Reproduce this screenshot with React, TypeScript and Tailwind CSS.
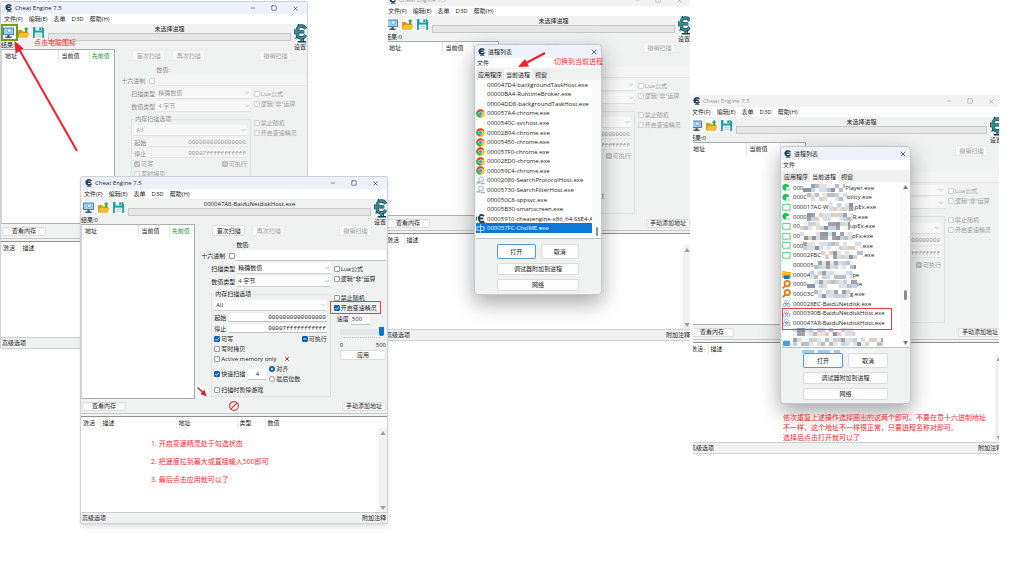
import React from "react";
import { ChevronDown, Minus, Square, X } from "lucide-react";

const field = "min-w-0 bg-white border-b border-b-[#c2c2c2] px-px text-[6px] leading-[8px] outline-none disabled:bg-[#f4f4f4] disabled:border-b-[#e6e6e6] disabled:text-[#999]";
const note = "text-[#ee2a30] text-[7px] whitespace-nowrap";

const processes = [
    { icon: '', name: '000047D4-backgroundTaskHost.exe' },
    { icon: '', name: '00000BA4-RuntimeBroker.exe' },
    { icon: '', name: '00004DD8-backgroundTaskHost.exe' },
    { icon: 'chrome', name: '000057A4-chrome.exe' },
    { icon: '', name: '0000540C-svchost.exe' },
    { icon: 'chrome', name: '00002B94-chrome.exe' },
    { icon: 'chrome', name: '00005450-chrome.exe' },
    { icon: 'chrome', name: '000057F0-chrome.exe' },
    { icon: 'chrome', name: '00002ED0-chrome.exe' },
    { icon: 'chrome', name: '000059C4-chrome.exe' },
    { icon: 'search', name: '00002080-SearchProtocolHost.exe' },
    { icon: 'search', name: '00005730-SearchFilterHost.exe' },
    { icon: '', name: '000050C8-sppsvc.exe' },
    { icon: '', name: '00005B30-smartscreen.exe' },
    { icon: 'engine', name: '00005910-cheatengine-x86_64-SSE4-A' },
    { icon: 'ime', name: '000057FC-ChsIME.exe', selected: true },
];

// blur = width of the pixelated part between name and tail
const hiddenProcesses = [
    { icon: 'green', name: '000', blur: 42, tail: 'Player.exe' },
    { icon: 'green', name: '000C', blur: 40, tail: 'bility.exe' },
    { icon: 'box', name: '000017AC-W', blur: 26, tail: 'pEx.exe' },
    { icon: 'green', name: '0000', blur: 46, tail: 'R.exe' },
    { icon: 'box', name: '00', blur: 50, tail: 'upEx.exe' },
    { icon: 'box', name: '00', blur: 52, tail: 'pFx.exe' },
    { icon: 'box', name: '000', blur: 58, tail: '.exe' },
    { icon: 'box', name: '00002FBC', blur: 42, tail: '.exe' },
    { icon: '', name: '000005', blur: 42, tail: '' },
    { icon: 'folder', name: '00004', blur: 42, tail: 'pe' },
    { icon: 'orange', name: '0000', blur: 50, tail: 'te' },
    { icon: 'orange', name: '00003C', blur: 36, tail: 'g.exe' },
    { icon: 'baidu', name: '000028EC-BaiduNetdisk.exe' },
    { icon: 'baidu', name: '0000390B-BaiduNetdiskHost.exe' },
    { icon: 'baidu', name: '000047A8-BaiduNetdiskHost.exe' },
    { icon: '', name: '', blur: 62, tail: '' },
    { icon: 'blue', name: '', blur: 90, tail: '' },
];

const EngineLogo = ({ className, color = '#1d3b4d', fill = '#1d3b4d' }: any) => (
    <svg viewBox="0 0 14 18" className={className} preserveAspectRatio="none">
        <path d="M12.6 4.6C11.6 2.6 9.8 1.8 7.8 1.9C4.6 2 2.9 4.4 3 7.6C3.1 11 5 13.2 8 13.2C10 13.2 11.6 12.3 12.6 10.4M2.6 7.5H11" fill="none" stroke={color} strokeWidth="3.2" />
        <path d="M12.6 4.6C11.6 2.6 9.8 1.8 7.8 1.9C4.6 2 2.9 4.4 3 7.6C3.1 11 5 13.2 8 13.2C10 13.2 11.6 12.3 12.6 10.4M2.6 7.5H11" fill="none" stroke={fill} strokeWidth="1.8" />
        <path d="M1 5.2L0 7.5L1 9.8M4 1.4L5.4 0M3 12L1.8 13.8" stroke={color} strokeWidth="1.2" fill="none" />
        <path d="M7.6 14V16M10 14V16M4 16.8H13" stroke={color} strokeWidth="1.4" />
    </svg>
);

const ProcessIcon = ({ icon }: { icon: string }) => (
    <svg viewBox="0 0 10 10" className="w-[9px] h-[9px] shrink-0">
        {icon === 'chrome' && <>
            <circle cx="5" cy="5" r="4.8" fill="#fbc116" />
            <path d="M5 5L0.8 2.7A4.8 4.8 0 0 1 9.3 2.9H5Z" fill="#e33b2e" />
            <path d="M5 5L0.8 2.7A4.8 4.8 0 0 0 4.6 9.8L7 6.2Z" fill="#2da94f" />
            <circle cx="5" cy="5" r="2.3" fill="#fff" />
            <circle cx="5" cy="5" r="1.8" fill="#4285f4" />
        </>}
        {icon === 'search' && <>
            <circle cx="5.6" cy="3.8" r="2.8" fill="#e6eff5" stroke="#9ba8b2" strokeWidth="0.8" />
            <path d="M4 6L2 7.6" stroke="#8e9ba6" strokeWidth="1.2" />
            <path d="M0.6 7.4H4.4M5 8.4H9.8" stroke="#a3adb5" strokeWidth="1.6" />
        </>}
        {icon === 'engine' && <>
            <path d="M9 2.2C6 0.4 3 1.6 3 5C3 8.4 6 9.6 9 8M2 5H8" fill="none" stroke="#1d3b4d" strokeWidth="2" />
            <path d="M0.5 3V7M4 0.8H7M4 9.4H9.6" stroke="#1d3b4d" />
        </>}
        {icon === 'ime' && <path d="M1 3H9V7H1ZM5 0.5V9.8" fill="none" stroke="#cfe5f8" />}
        {icon === 'green' && <>
            <path d="M5 1A3.8 3.8 0 1 0 5 8.4L4.6 5L8.4 4A3.8 3.8 0 0 0 5 1Z" fill="#1fc457" />
            <circle cx="8" cy="7.6" r="1.6" fill="#d4d9d6" />
        </>}
        {icon === 'box' && <>
            <path d="M0.8 1.6H9V8H0.8Z" fill="#fff" stroke="#3ccf73" />
            <circle cx="8" cy="8" r="1.6" fill="#c9cfcb" />
        </>}
        {icon === 'folder' && <>
            <path d="M0 1H4L5 2.2H10V9H0Z" fill="#f6bd27" />
            <path d="M2 6H8.4V10H2Z" fill="#1672cb" />
        </>}
        {icon === 'orange' && <>
            <circle cx="5.8" cy="4" r="3" fill="#fff" stroke="#e27a17" strokeWidth="2" />
            <path d="M3.6 6.2L0.8 9.2" stroke="#e27a17" strokeWidth="2" />
        </>}
        {icon === 'baidu' && <>
            <circle cx="5" cy="3.4" r="2.2" fill="#fff" stroke="#6db2e6" strokeWidth="0.8" />
            <circle cx="2.8" cy="6.8" r="1.8" fill="#fff" stroke="#4a9fe0" strokeWidth="0.8" />
            <circle cx="7.2" cy="6.8" r="1.8" fill="#fff" stroke="#4a9fe0" strokeWidth="0.8" />
            <path d="M3.4 5.6L5 4L6.6 5.6" stroke="#e5434a" fill="none" />
        </>}
        {icon === 'blue' && <path d="M1 3H9V9H1Z" fill="#4a9fe0" />}
    </svg>
);

const mosaicColors = ['#ffffff', '#b9bfc9', '#e9e2dc', '#8e96a6', '#ffffff', '#d4dfec', '#a2a2a8', '#dccfc4', '#f4f4f4', '#c4d3e4'];

const Mosaic = ({ width, seed }: { width: number; seed: number }) => {
    const cells = [];
    for (let x = 0; x * 4 < width; x++) {
        for (let y = 0; y < 2; y++) {
            const n = (x * 7 + y * 13 + seed * 11 + ((x * x * (seed + 3)) % 17)) % mosaicColors.length;
            cells.push(<rect key={`${x}-${y}`} x={x * 4} y={y * 4} width="4" height="4" fill={mosaicColors[n]} />);
        }
    }
    return <svg className="h-[8px] shrink-0" style={{ width }} shapeRendering="crispEdges">{cells}</svg>;
};

const PushButton = ({ children, className = '', disabled = false, primary = false }: any) => (
    <button disabled={disabled} className={`flex items-center justify-center rounded-[2px] border bg-[#fdfdfd] text-[6px] leading-[8px] whitespace-nowrap disabled:text-[#a3a3a3] disabled:bg-[#f7f7f7] disabled:border-[#ebebeb] ${primary ? 'border-[#4c9bdc]' : 'border-[#dcdcdc]'} ${className}`}>
        {children}
    </button>
);

const Check = ({ label, checked = false, partial = false, disabled = false }: any) => (
    <label className={`flex items-center gap-px whitespace-nowrap ${disabled ? 'text-[#a0a0a0]' : ''}`}>
        <span className="grid shrink-0">
            <input type="checkbox" aria-label={label ? undefined : '十六进制'} defaultChecked={checked || partial} disabled={disabled} className="[grid-area:1/1] appearance-none w-[6px] h-[6px] rounded-[1px] border border-[#999] bg-white checked:bg-[#0f62b4] checked:border-[#0f62b4] disabled:border-[#cfcfcf] disabled:checked:bg-[#bdbdbd] disabled:checked:border-[#bdbdbd]" />
            {(checked || partial) && (
                <svg viewBox="0 0 6 6" className="[grid-area:1/1] w-[6px] h-[6px] pointer-events-none">
                    <path d={partial ? 'M1.4 3H4.6' : 'M1.3 3L2.6 4.3L4.8 1.8'} stroke="#fff" strokeWidth="0.8" fill="none" />
                </svg>
            )}
        </span>
        {label}
    </label>
);

const Pick = ({ name, value, disabled }: any) => (
    <div className={`flex items-center flex-1 min-w-0 h-[11px] border-b pr-px ${disabled ? 'bg-[#f8f8f8] border-[#e2e2e2] text-[#999]' : 'bg-white border-[#cfcfcf]'}`}>
        <select aria-label={name} disabled={disabled} className="appearance-none flex-1 min-w-0 pl-[2px] text-[6px] leading-[8px] bg-transparent outline-none">
            <option>{value}</option>
        </select>
        <ChevronDown className="w-[6px] h-[6px] text-[#888]" strokeWidth={2} />
    </div>
);

const Toolbar = () => (
    <>
        <button aria-label="open process" className="w-[13px] h-[13px] bg-[#fbfbfb]">
            <svg viewBox="0 0 13 13">
                <path d="M1 1.5H12V9H1Z" fill="#4d7fa8" />
                <path d="M2 2.5H11V8H2Z" fill="#9fd0f2" />
                <circle cx="7.4" cy="4.6" r="2" fill="#d6edfb" stroke="#5b8fb6" strokeWidth="0.6" />
                <path d="M5.4 9H7.6V11H5.4ZM3.4 10.6H9.6V12H3.4Z" fill="#4a5a67" />
            </svg>
        </button>
        <button aria-label="load" className="w-[13px] h-[13px] bg-[#fbfbfb]">
            <svg viewBox="0 0 13 13">
                <path d="M1 4H5L6 5.4H11V11.4H1Z" fill="#d79a17" />
                <path d="M3 7H12.4L11 11.6H1Z" fill="#f3c02f" />
                <path d="M8.2 6.4V3.6H6.8L9.2 1L11.6 3.6H10.2V6.4Z" fill="#36a53f" />
            </svg>
        </button>
        <button aria-label="save" className="w-[13px] h-[13px] bg-[#fbfbfb]">
            <svg viewBox="0 0 13 13">
                <path d="M1 1H10.4L12 2.6V12H1Z" fill="#16a0a3" />
                <path d="M3.4 1H9.6V4.6H3.4Z" fill="#dff3f3" />
                <path d="M7.4 1.6H8.8V4H7.4Z" fill="#126c70" />
                <path d="M2.8 6.6H10.2V12H2.8Z" fill="#f2f7f7" />
                <path d="M4 8.4H9M4 10.2H9" stroke="#9fb8b9" strokeWidth="0.7" />
            </svg>
        </button>
    </>
);

type EngineProps = {
    className: string;
    process: string;
    active?: boolean;
    attached?: boolean;
};

const EngineWindow = ({ className, process, active = false, attached = false }: EngineProps) => {
    const off = !attached;
    const dim = off ? 'text-[#909090]' : '';
    return (
        <section className={`absolute flex flex-col bg-[#f0f1f1] border border-[#cdd2d8] rounded-t-[3px] ${className}`}>
            <header className={`flex items-center h-[12px] shrink-0 pl-1 pr-[8px] rounded-t-[3px] ${active ? 'bg-[#edf2fa]' : 'bg-[#f2f2f2] text-[#999]'}`}>
                <EngineLogo className="w-[7px] h-[8px] mr-[3px]" />
                <h2 className="flex-1">Cheat Engine 7.5</h2>
                <div className="flex items-center gap-[15px]">
                    <Minus className="w-[6px] h-[6px]" />
                    <Square className="w-[6px] h-[6px]" />
                    <X className="w-[7px] h-[7px]" />
                </div>
            </header>
            <nav className="flex items-center gap-[6px] h-[10px] shrink-0 pl-[3px] bg-white">
                <a href="#">文件(F)</a>
                <a href="#">编辑(E)</a>
                <a href="#">表单</a>
                <a href="#">D3D</a>
                <a href="#">帮助(H)</a>
            </nav>

            <div className="flex h-[25px] shrink-0">
                <div className="flex-1 flex flex-col">
                    <div className="flex items-center gap-[2px] h-[17px] pl-px pr-[2px]">
                        <Toolbar />
                        <div className="flex-1 pl-px">
                            <p className="text-center">{process}</p>
                            <div className="h-[8px] bg-[#e6e6e6] border border-[#c9c9c9]" />
                        </div>
                    </div>
                    <p>结果:0</p>
                </div>
                <div className="w-[14px] flex flex-col items-center">
                    <EngineLogo className="w-[13px] h-[19px] shrink-0" color="#163c4c" fill="#2a93a0" />
                    <p className="whitespace-nowrap">设置</p>
                </div>
            </div>

            <div className="flex grow-2 basis-[175px]">
                <div className="grow-3 basis-[114px] bg-white border border-[#a9adb0] border-l-[#d5d5d5]">
                    <table className="w-full table-fixed">
                        <thead>
                            <tr className="h-[12px] text-left">
                                <th className="w-[56px] font-normal pl-[3px] border-r border-[#e5e5e5]">地址</th>
                                <th className="font-normal pl-[3px] border-r border-[#e5e5e5]">当前值</th>
                                <th className="w-[25px] font-normal pl-[2px] text-[#27933a]">先前值</th>
                            </tr>
                        </thead>
                    </table>
                </div>

                <form className="grow-6 basis-[191px] flex flex-col pb-[2px]">
                    <div className="grow basis-[13px] flex items-center gap-[7px] pl-[17px] pr-[15px]">
                        <PushButton disabled={off} className="w-[33px] h-[11px]">首次扫描</PushButton>
                        <PushButton disabled className="w-[33px] h-[11px]">再次扫描</PushButton>
                        <PushButton disabled className="w-[33px] h-[11px] ml-auto">撤销扫描</PushButton>
                    </div>
                    <p className={`basis-[12px] flex items-end pl-[41px] ${dim}`}>数值:</p>
                    <div className={`basis-[13px] flex items-center pr-px ${dim}`}>
                        <div className="w-[41px] flex items-center justify-end gap-1 pr-px shrink-0 whitespace-nowrap">
                            十六进制
                            <Check disabled={off} />
                        </div>
                        <input aria-label="数值" disabled={off} className={`${field} flex-1 h-[11px]`} />
                    </div>

                    <div className="grow basis-[135px] flex gap-[3px]">
                        <div className={`grow-2 basis-[135px] flex flex-col ${dim}`}>
                            <div className="basis-[13px] flex items-center">
                                <span className="w-[41px] shrink-0 text-right pr-px">扫描类型</span>
                                <Pick name="扫描类型" value="精确数值" disabled={off} />
                            </div>
                            <div className="basis-[13px] flex items-center">
                                <span className="w-[41px] shrink-0 text-right pr-px">数值类型</span>
                                <Pick name="数值类型" value="4 字节" disabled={off} />
                            </div>
                            <fieldset className="grow flex flex-col ml-[16px] mt-[2px] border border-[#e1e1e1] pl-[2px] pr-[3px] pt-px">
                                <legend className="px-px">内存扫描选项</legend>
                                <div className="grow basis-[13px] flex items-center">
                                    <Pick name="内存扫描选项" value="All" disabled={off} />
                                </div>
                                <label className="grow basis-[11px] flex items-center gap-[3px]">
                                    <span className="shrink-0">起始</span>
                                    <input disabled={off} defaultValue="0000000000000000" className={`${field} flex-1 h-[9px] text-right font-['Liberation_Mono',monospace]`} />
                                </label>
                                <label className="grow basis-[11px] flex items-center gap-[3px]">
                                    <span className="shrink-0">停止</span>
                                    <input disabled={off} defaultValue="00007fffffffffff" className={`${field} flex-1 h-[9px] text-right font-['Liberation_Mono',monospace]`} />
                                </label>
                                <div className="basis-[10px] flex items-center justify-between">
                                    <Check label="可写" checked disabled={off} />
                                    <Check label="可执行" partial disabled={off} />
                                </div>
                                <div className="basis-[10px] flex items-center">
                                    <Check label="写时拷贝" disabled={off} />
                                </div>
                                <div className="basis-[10px] flex items-center gap-[6px]">
                                    <Check label="Active memory only" disabled={off} />
                                    <button type="button" aria-label="clear" className="w-[9px] h-[9px] bg-[#fbfbfb] flex items-center justify-center text-[#d3202c]">
                                        <X className="w-[6px] h-[6px]" strokeWidth={4} />
                                    </button>
                                </div>
                                <div className="basis-[20px] flex items-center gap-[3px]">
                                    <Check label="快速扫描" checked disabled={off} />
                                    <input aria-label="快速扫描" disabled={off} defaultValue="4" className={`${field} w-[18px] h-[11px] text-center`} />
                                    <div>
                                        {['对齐', '最后位数'].map((label, i) => (
                                            <label key={label} className="flex items-center gap-px h-[10px]">
                                                <input type="radio" name={`align-${className}`} defaultChecked={i === 0} disabled={off} className="appearance-none w-[6px] h-[6px] rounded-full border border-[#999] bg-white checked:border-2 checked:border-[#0f62b4] disabled:border-[#cfcfcf]" />
                                                {label}
                                            </label>
                                        ))}
                                    </div>
                                </div>
                                <div className="basis-[12px] flex items-center">
                                    <Check label="扫描时暂停游戏" disabled={off} />
                                </div>
                            </fieldset>
                        </div>

                        <div className="grow basis-[53px] flex flex-col pt-[2px] pr-px">
                            <div className="h-[10px] flex items-center"><Check label="Lua公式" disabled={off} /></div>
                            <div className="h-[10px] flex items-center"><Check label={'逻辑"非"运算'} disabled={off} /></div>
                            <div className="h-[10px] flex items-center mt-[9px]"><Check label="禁止随机" disabled={off} /></div>
                            <div className="h-[10px] flex items-center"><Check label="开启变速精灵" checked={attached} disabled={off} /></div>
                            {attached && (
                                <>
                                    <label className="h-[12px] flex items-center gap-[2px] pl-[3px]">
                                        速度
                                        <input defaultValue="500" className={`${field} w-[19px] h-[11px]`} />
                                    </label>
                                    <div className="h-[16px] pl-[6px] pr-[2px] pt-[2px]">
                                        <input
                                            type="range"
                                            aria-label="速度"
                                            min="0"
                                            max="500"
                                            defaultValue="500"
                                            className="block appearance-none w-full h-[9px] bg-[linear-gradient(#e4e6e7,#e4e6e7)] bg-size-[100%_6px] bg-no-repeat bg-center [&::-webkit-slider-thumb]:appearance-none [&::-webkit-slider-thumb]:w-[5px] [&::-webkit-slider-thumb]:h-[9px] [&::-webkit-slider-thumb]:rounded-b-[2px] [&::-webkit-slider-thumb]:bg-[#0b76d1]"
                                        />
                                        <div className="mx-[3px] mt-px border-b border-dotted border-[#c5c5c5]" />
                                    </div>
                                    <div className="h-[9px] flex justify-between pl-[6px]">
                                        <span>0</span>
                                        <span>500</span>
                                    </div>
                                    <PushButton className="ml-[6px] h-[10px]">应用</PushButton>
                                </>
                            )}
                        </div>
                    </div>
                </form>
            </div>

            <div className="flex items-center justify-between h-[14px] shrink-0 px-px">
                <PushButton className="w-[44px] h-[9px]">查看内存</PushButton>
                {attached && (
                    <button aria-label="stop" className="w-[12px] h-[12px] bg-[#fbfbfb]">
                        <svg viewBox="0 0 12 12">
                            <circle cx="6" cy="6" r="4.4" fill="none" stroke="#d63a40" strokeWidth="1.2" />
                            <path d="M2.9 9.1L9.1 2.9" stroke="#d63a40" strokeWidth="1.2" />
                        </svg>
                    </button>
                )}
                <PushButton className="w-[44px] h-[9px]">手动添加地址</PushButton>
            </div>
            <div className="h-[4px] shrink-0 border-t border-b border-t-[#c8c8c8] border-b-[#8f8f8f]" />

            <div className="flex grow basis-[95px] bg-white">
                <div className="flex-1">
                    <table className="w-full table-fixed">
                        <thead>
                            <tr className="h-[12px] text-left whitespace-nowrap">
                                <th className="w-[19px] font-normal pl-[2px] border-r border-[#ececec]">激活</th>
                                <th className="w-[76px] font-normal pl-[2px] border-r border-[#ececec]">描述</th>
                                <th className="w-[61px] font-normal pl-[2px] border-r border-[#ececec]">{attached && '地址'}</th>
                                <th className="w-[28px] font-normal pl-[2px] border-r border-[#ececec]">{attached && '类型'}</th>
                                <th className="font-normal pl-[2px]">{attached && '数值'}</th>
                            </tr>
                        </thead>
                    </table>
                </div>
                <div className="w-[8px] mt-[11px] flex flex-col justify-between items-center py-[2px] bg-[#f1f1f1] text-[5px] leading-[6px] text-[#9a9a9a]">
                    <span>▲</span>
                    <span>▼</span>
                </div>
            </div>
            <footer className="flex items-center justify-between h-[11px] shrink-0 px-px border-t border-[#cfcfcf]">
                <span>高级选项</span>
                <span>附加注释</span>
            </footer>
        </section>
    );
};

const ProcessDialog = ({ className, items, thumb, listPadding, arrows = false }: any) => (
    <section className={`absolute flex flex-col bg-[#f0f1f1] border border-[#c4c8cc] rounded-[4px] shadow-[0_8px_20px_rgba(0,0,0,0.35)] ${className}`}>
        <header className="flex items-center h-[13px] shrink-0 px-[3px] rounded-t-[4px] bg-[#edf2fa]">
            <EngineLogo className="w-[7px] h-[8px] mr-[3px]" />
            <h2 className="flex-1">进程列表</h2>
            <button aria-label="close"><X className="w-[8px] h-[8px]" /></button>
        </header>
        <nav className="flex items-center h-[10px] shrink-0 pl-[2px] bg-white">
            <a href="#">文件</a>
        </nav>
        <div role="tablist" className="flex items-end h-[12px] shrink-0 pl-px">
            <button role="tab" className="px-[2px] h-[10px] bg-[#ececec]">应用程序</button>
            <button role="tab" aria-selected="true" className="px-[2px] h-[11px] bg-[#fafafa]">当前进程</button>
            <button role="tab" className="px-[3px] h-[10px] bg-[#ececec]">视窗</button>
        </div>
        <div className="flex grow ml-px bg-white border-b border-[#c2c2c2]">
            <ul className={`flex-1 min-w-0 flex flex-col ${listPadding}`}>
                {items.map((item: any, i: number) => (
                    <li key={i} className={`flex-1 flex items-center gap-[2px] overflow-hidden whitespace-nowrap ${item.selected ? 'bg-[#0b78d7] text-white' : ''}`}>
                        <ProcessIcon icon={item.icon} />
                        <span className="flex items-center">
                            {item.name}
                            {item.blur && <Mosaic width={item.blur} seed={i} />}
                            {item.tail}
                        </span>
                    </li>
                ))}
            </ul>
            <div className="w-[9px] bg-[#fafafa] flex flex-col items-center justify-between py-[2px] text-[5px] leading-[6px] text-[#777]">
                <span>{arrows && '▲'}</span>
                <span className={`rounded-full bg-[#8d8d8d] ${thumb}`} />
                <span>{arrows && '▼'}</span>
            </div>
        </div>
        <div className="flex flex-col gap-[4px] shrink-0 px-[22px] pt-[5px] pb-[3px]">
            <div className="flex gap-[5px]">
                <PushButton primary className="flex-1 h-[15px]">打开</PushButton>
                <PushButton className="flex-1 h-[15px]">取消</PushButton>
            </div>
            <PushButton className="h-[12px]">调试器附加到进程</PushButton>
            <PushButton className="h-[12px]">网络</PushButton>
        </div>
    </section>
);

const App = () => {
    return (
        <main className="relative min-h-screen overflow-hidden bg-white text-[#1c1c1c] text-[6px] leading-[8px] font-['Open_Sans','Noto_Sans_CJK_SC',sans-serif]">
            <EngineWindow className="left-0 top-px w-[308px] h-[348px]" process="未选择进程" active />
            <div className="absolute left-[1px] top-[24px] w-[17px] h-[17px] border-2 border-[#6f9f12]" />
            <p className={`absolute left-[34px] top-[39px] ${note}`}>点击电脑图标</p>

            {/* second step */}
            <div className="absolute left-[388px] top-0 w-[302px] h-[342px] overflow-hidden">
                <EngineWindow className="left-[-4px] top-[-7px] w-[308px] h-[348px]" process="未选择进程" />
                <ProcessDialog className="left-[86px] top-[44px] w-[128px] h-[251px]" items={processes} thumb="w-[2px] h-[9px] mt-auto" listPadding="pb-[5px]" />
                <p className={`absolute left-[166px] top-[58px] ${note}`}>切换到当前进程</p>
            </div>

            {/* third step */}
            <div className="absolute left-[693px] top-[95px] w-[306px] h-[359px] overflow-hidden">
                <EngineWindow className="left-[-5px] top-[-1px] w-[316px] h-[360px]" process="未选择进程" />
                <ProcessDialog className="left-[87px] top-[51px] w-[131px] h-[258px]" items={hiddenProcesses} thumb="w-[3px] h-[10px] mt-[60px]" listPadding="pt-px" arrows />
                {/* leftovers of the pixelated rows above the buttons */}
                <svg className="absolute left-[107px] top-[254px] w-[90px] h-[6px]" shapeRendering="crispEdges">
                    <path d="M2 1H14V4H2ZM18 1H30V4H18ZM34 1H40V4H34Z" fill="#9ccbee" />
                    <path d="M46 1H58V4H46ZM64 1H74V4H64Z" fill="#f8f8f8" />
                </svg>
                <div className="absolute left-[89px] top-[213px] w-[110px] h-[22px] border border-[#ee3a42]" />
                <p className={`absolute left-[90px] top-[318px] leading-[10px] ${note}`}>
                    依次重复上述操作选择圈出的这两个即可。不要在意十六进制地址<br />
                    不一样，这个地址不一样很正常，只要进程名称对即可。<br />
                    选择后点击打开就可以了
                </p>
            </div>

            {/* last step */}
            <EngineWindow className="left-[80px] top-[176px] w-[308px] h-[348px] shadow-md" process="000047A8-BaiduNetdiskHost.exe" active attached />
            <div className="absolute left-[330px] top-[301px] w-[51px] h-[13px] border border-[#ee3a42]" />
            <ol className={`absolute left-[151px] top-[435px] leading-[18px] ${note}`}>
                <li>1. 开启变速精灵处于勾选状态</li>
                <li>2. 把速度拉到最大或直接输入500即可</li>
                <li>3. 最后点击应用就可以了</li>
            </ol>

            <svg className="absolute left-0 top-0 w-[1024px] h-[576px] pointer-events-none">
                <path d="M77 151L19 49" stroke="#ee2128" strokeWidth="2" />
                <path d="M14.500 41L15.600 53.500L23.600 48.600Z" fill="#ee2128" />
                <path d="M545 53L526 63" stroke="#ee2128" strokeWidth="2" />
                <path d="M518 67L525 59L529 66.500Z" fill="#ee2128" />
                <path d="M196 386H208V398H196Z" fill="#fbfbfb" />
                <path d="M197.500 387.500L203 392.500" stroke="#d3202c" strokeWidth="1.500" />
                <path d="M206.500 396.500L200.500 394L204.500 389.500Z" fill="#d3202c" />
            </svg>
        </main>
    );
};

export default App;
